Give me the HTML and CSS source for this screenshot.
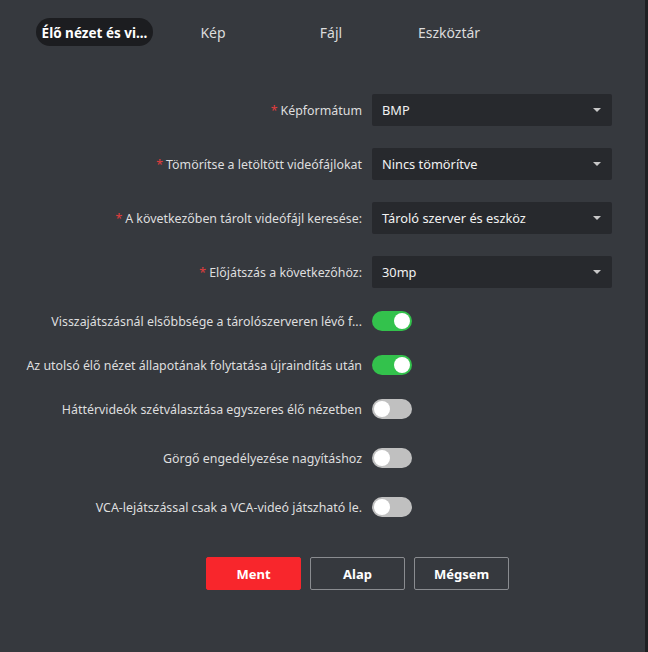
FILE: index.html
```html
<!DOCTYPE html>
<html lang="hu">
<head>
<meta charset="utf-8">
<link rel="stylesheet" href="styles.css">
</head>
<body>
<div class="page">
  <nav class="tabs">
    <div class="tab active">Élő nézet és vi...</div>
    <div class="tab">Kép</div>
    <div class="tab">Fájl</div>
    <div class="tab">Eszköztár</div>
  </nav>
  <div class="form">
    <div class="row sel">
      <label class="lbl"><span class="req">*</span>Képformátum</label>
      <div class="select"><span>BMP</span><i class="caret"></i></div>
    </div>
    <div class="row sel">
      <label class="lbl"><span class="req">*</span>Tömörítse a letöltött videófájlokat</label>
      <div class="select"><span>Nincs tömörítve</span><i class="caret"></i></div>
    </div>
    <div class="row sel">
      <label class="lbl"><span class="req">*</span>A következőben tárolt videófájl keresése:</label>
      <div class="select"><span>Tároló szerver és eszköz</span><i class="caret"></i></div>
    </div>
    <div class="row sel">
      <label class="lbl"><span class="req">*</span>Előjátszás a következőhöz:</label>
      <div class="select"><span>30mp</span><i class="caret"></i></div>
    </div>
    <div class="row tog first">
      <label class="lbl">Visszajátszásnál elsőbbsége a tárolószerveren lévő f...</label>
      <div class="switch on"><i></i></div>
    </div>
    <div class="row tog">
      <label class="lbl">Az utolsó élő nézet állapotának folytatása újraindítás után</label>
      <div class="switch on"><i></i></div>
    </div>
    <div class="row tog">
      <label class="lbl">Háttérvideók szétválasztása egyszeres élő nézetben</label>
      <div class="switch"><i></i></div>
    </div>
    <div class="row tog wide">
      <label class="lbl">Görgő engedélyezése nagyításhoz</label>
      <div class="switch"><i></i></div>
    </div>
    <div class="row tog wide">
      <label class="lbl">VCA-lejátszással csak a VCA-videó játszható le.</label>
      <div class="switch"><i></i></div>
    </div>
  </div>
  <div class="actions">
    <button class="btn primary">Ment</button>
    <button class="btn">Alap</button>
    <button class="btn">Mégsem</button>
  </div>
</div>
</body>
</html>
```
FILE: styles.css
```css
html, body {
  margin: 0;
  padding: 0;
  height: 100%;
}
body {
  background: #36393e;
  font-family: "Noto Sans", "Open Sans", sans-serif;
  color: #e2e2e2;
}
.page {
  height: 652px;
  box-sizing: border-box;
  border-right: 3px solid #1f2023;
  padding-top: 18px;
}
.tabs {
  display: flex;
  padding-left: 36px;
}
.tab {
  width: 118px;
  height: 27px;
  padding-top: 1px;
  line-height: 28px;
  text-align: center;
  font-size: 14px;
  color: #dcdcdc;
}
.tab.active {
  background: #1c1d20;
  border-radius: 14px;
  color: #fff;
  font-weight: 700;
  width: 117px;
  margin-right: 1px;
  font-size: 13.5px;
}
.form {
  margin-top: 48px;
  display: flex;
  flex-direction: column;
}
.row {
  display: grid;
  grid-template-columns: 362px 240px;
  column-gap: 10px;
  align-items: center;
}
.row.sel {
  height: 32px;
  margin-bottom: 22px;
}
.row.tog {
  height: 20px;
  margin-bottom: 24px;
}
.row.tog.first {
  margin-top: 1px;
}
.row.tog.wide {
  margin-top: 5px;
}
.lbl {
  text-align: right;
  font-size: 12.4px;
  color: #dedede;
  white-space: nowrap;
}
.req {
  color: #e23d3d;
  margin-right: 3px;
}
.select {
  height: 32px;
  background: #27292d;
  border-radius: 2px;
  display: flex;
  align-items: center;
  justify-content: space-between;
  padding: 0 11px 0 10px;
  font-size: 12.8px;
  color: #f2f2f2;
}
.caret {
  width: 0;
  height: 0;
  border-left: 4px solid transparent;
  border-right: 4px solid transparent;
  border-top: 4px solid #c8c8c8;
}
.switch {
  width: 40px;
  height: 20px;
  border-radius: 10px;
  background: #c0c0c0;
  position: relative;
}
.switch.on {
  background: #33c24c;
}
.switch i {
  position: absolute;
  top: 2px;
  left: 2px;
  width: 16px;
  height: 16px;
  border-radius: 50%;
  background: #fff;
}
.switch.on i {
  left: 22px;
}
.actions {
  display: flex;
  gap: 9px;
  padding-left: 206px;
  margin-top: 16px;
}
.btn {
  width: 95px;
  height: 33px;
  border: 1px solid #8a8c90;
  border-radius: 2px;
  background: transparent;
  color: #fff;
  font-family: "Noto Sans", "Open Sans", sans-serif;
  font-weight: 700;
  font-size: 13px;
}
.btn.primary {
  background: #f8262c;
  border-color: #f8262c;
}
```
